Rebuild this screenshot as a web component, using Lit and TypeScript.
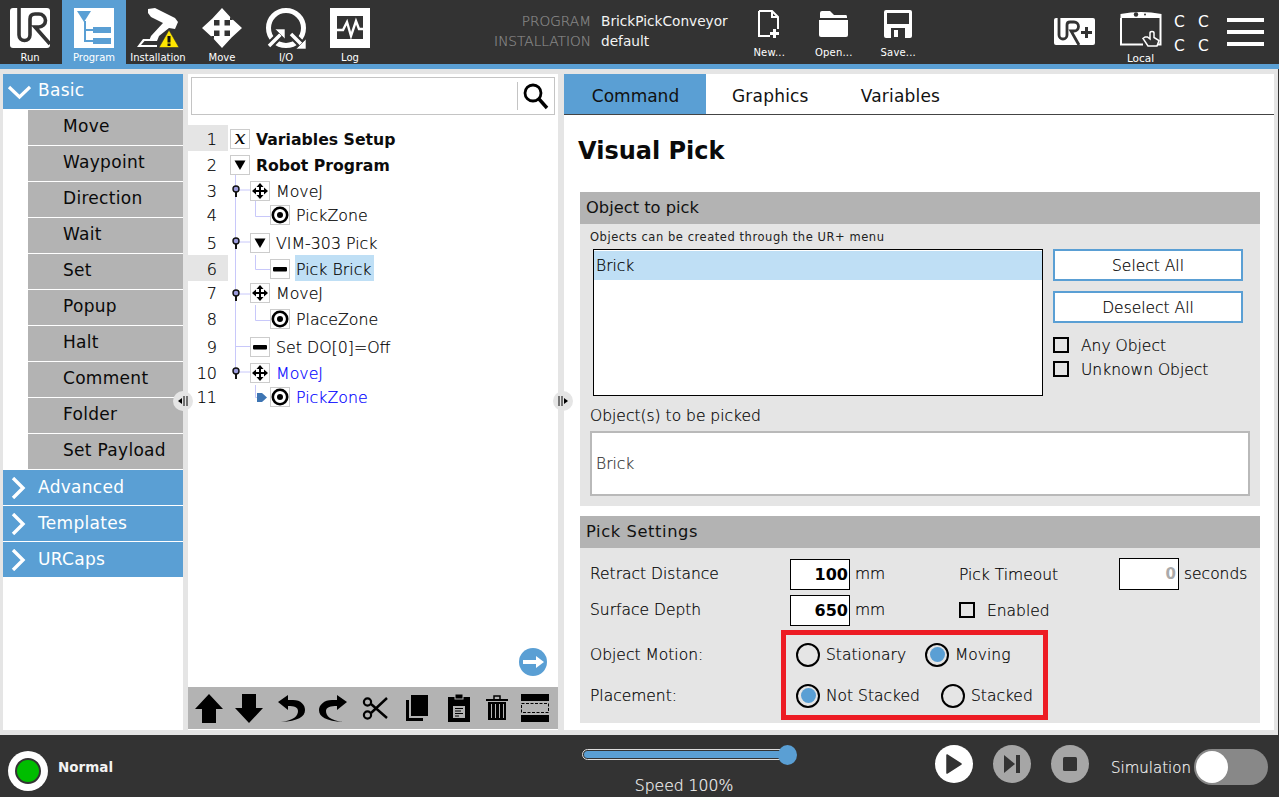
import { LitElement, html, css, svg } from "lit";
import { customElement } from "lit/decorators.js";

const urPath = "M9 0V27a5.500 5.500 0 0 0 11 0V11Q20 6 25 6H29a6.500 6.500 0 0 1 0 13H25L40 36";

const tabIcons: Record<string, unknown> = {
  Run: svg`<svg width="40" height="40" viewBox="0 0 40 40"><rect width="40" height="40" rx="3" fill="#fff"/><path d="${urPath}" fill="none" stroke="#333" stroke-width="3.600"/></svg>`,
  Program: svg`<svg width="40" height="40" viewBox="0 0 40 40"><rect width="40" height="40" fill="#fff"/><path d="M3 3H17L10 14Z" fill="#5a9fd4"/><path d="M11 13V33H19M11 22H19" fill="none" stroke="#5a9fd4" stroke-width="2"/><rect x="19" y="19" width="18" height="6" fill="#5a9fd4"/><rect x="19" y="30" width="18" height="6" fill="#5a9fd4"/></svg>`,
  Installation: svg`<svg width="42" height="40" viewBox="0 0 42 40"><path d="M0 39L6 31H20V33H7.500L4 37H20V39Z" fill="#fff"/><path d="M11 1L18 0L38 10L41 14L38 21L32 20L22 28L20 33H12L14 28L26 15L14 9L11 5Z" fill="#fff"/><path d="M22 39.500L32 22L42 39.500Z" fill="#ffe600" stroke="#333" stroke-width=".6"/><rect x="30.500" y="28" width="3" height="6.500" fill="#111"/><rect x="30.500" y="35.500" width="3" height="2.500" fill="#111"/></svg>`,
  Move: svg`<svg width="40" height="40" viewBox="0 0 40 40"><path d="M20 0L31 12H9ZM20 40L31 28H9ZM0 20L12 9V31ZM40 20L28 9V31Z" fill="#fff"/><path d="M17.500 8H22.500V32H17.500ZM8 17.500H32V22.500H8Z" fill="#fff"/></svg>`,
  "I/O": svg`<svg width="42" height="42" viewBox="0 0 42 42"><circle cx="21" cy="20" r="17.500" fill="none" stroke="#fff" stroke-width="5"/><path d="M4 38L17 25M39 39L26 26" stroke="#333" stroke-width="8"/><path d="M4 38L16 26M26 26L38 38" stroke="#fff" stroke-width="3.500"/><path d="M20 21V31L10 21Z" fill="#fff" stroke="#333" stroke-width=".6"/><path d="M41 41H31L41 31Z" fill="#fff" stroke="#333" stroke-width=".6"/></svg>`,
  Log: svg`<svg width="40" height="40" viewBox="0 0 40 40"><rect width="40" height="40" fill="#fff"/><rect x="7" y="8" width="26" height="23" fill="#333"/><path d="M7 22H13L17 14L21 28L26 13L29 21H33" fill="none" stroke="#fff" stroke-width="2.400"/></svg>`,
};

const arrows4 = svg`<svg width="16" height="16" viewBox="0 0 16 16"><path d="M8 0L11.500 4H9V7H12V4.500L16 8L12 11.500V9H9V12H11.500L8 16L4.500 12H7V9H4V11.500L0 8L4 4.500V7H7V4H4.500Z"/></svg>`;
const target = svg`<svg width="18" height="18" viewBox="0 0 18 18"><circle cx="9" cy="9" r="7.200" fill="none" stroke="#000" stroke-width="2.600"/><circle cx="9" cy="9" r="3"/></svg>`;
const dash = svg`<svg width="16" height="16" viewBox="0 0 16 16"><rect x="1" y="6" width="14" height="4.500" rx="1"/></svg>`;
const tri = svg`<svg width="12" height="12" viewBox="0 0 12 12"><path d="M.500 1.500H11.500L6 11Z"/></svg>`;
const xvar = html`<span class="xv">x</span>`;

type Row = { n: number; h: number; pt: number; pb: number; d: number; icon: unknown; label: string; bold?: boolean; run?: boolean; sel?: boolean; hl?: boolean };
const rows: Row[] = [
  { n: 1, h: 26, pt: 2, pb: 0, d: 0, icon: xvar, label: "Variables Setup", bold: true, hl: true },
  { n: 2, h: 26, pt: 2, pb: 0, d: 0, icon: tri, label: "Robot Program", bold: true },
  { n: 3, h: 26, pt: 2, pb: 0, d: 1, icon: arrows4, label: "MoveJ" },
  { n: 4, h: 26, pt: 0, pb: 2, d: 2, icon: target, label: "PickZone" },
  { n: 5, h: 26, pt: 2, pb: 0, d: 1, icon: tri, label: "VIM-303 Pick" },
  { n: 6, h: 26, pt: 2, pb: 0, d: 2, icon: dash, label: "Pick Brick", sel: true, hl: true },
  { n: 7, h: 24, pt: 0, pb: 0, d: 1, icon: arrows4, label: "MoveJ" },
  { n: 8, h: 28, pt: 0, pb: 0, d: 2, icon: target, label: "PlaceZone" },
  { n: 9, h: 27, pt: 1, pb: 0, d: 1, icon: dash, label: "Set DO[0]=Off" },
  { n: 10, h: 25, pt: 1, pb: 0, d: 1, icon: arrows4, label: "MoveJ", run: true },
  { n: 11, h: 25, pt: 0, pb: 1, d: 2, icon: target, label: "PickZone", run: true },
];

const basic = ["Move", "Waypoint", "Direction", "Wait", "Set", "Popup", "Halt", "Comment", "Folder", "Set Payload"];

@customElement("app-root")
export class AppRoot extends LitElement {
  static styles = css`
    :host { display: block; width: 1279px; height: 797px; overflow: hidden; font-family: "DejaVu Sans", sans-serif; color: #111; background: #e5e5e5; position: relative; opacity: .999; }
    .top { height: 64px; background: #333; display: flex; color: #fff; }
    .accent { height: 5px; background: #5a9fd4; }
    .navs { display: flex; margin-left: -2px; }
    .nav { width: 64px; display: flex; flex-direction: column; align-items: center; padding-top: 8px; font-size: 10px; box-sizing: border-box; }
    .nav .ic { height: 45px; display: flex; align-items: flex-start; }
    .nav.on { background: #5a9fd4; }
    .nav span { line-height: 13px; }
    .info { margin-left: 106px; display: grid; grid-template-columns: 103px auto; column-gap: 10px; font-size: 13.700px; line-height: 20px; padding-top: 11px; width: 250px; height: 40px; }
    .info .k { text-align: right; color: #8a8a8a; font-weight: 200; -webkit-text-stroke: .2px; }
    .info .v { color: #f4f4f4; }
    .files { display: flex; margin-left: -1px; }
    .file { width: 64.500px; display: flex; flex-direction: column; align-items: center; padding-top: 10px; font-size: 10px; letter-spacing: .2px; }
    .file .ic { height: 37px; }
    .urp { margin: 18px 0 0 123px; width: 42px; }
    .local { margin-left: 23px; width: 44px; display: flex; flex-direction: column; align-items: center; padding-top: 11px; font-size: 10.500px; }
    .local .ic { height: 41px; }
    .cs { margin: 12px 0 0 5px; display: grid; grid-template-columns: 24px 24px; grid-auto-rows: 24px; font-size: 15.500px; line-height: 20px; text-align: center; width: 48px; }
    .burger { margin: 18px 0 0 11px; width: 37px; display: flex; flex-direction: column; gap: 8px; }
    .burger i { display: block; height: 4px; background: #fff; }

    .main { height: 661px; width: 1278px; padding-top: 5px; display: flex; box-sizing: content-box; border-right: 1px solid #333; }
    .left { margin-left: 3px; width: 180px; background: #fff; height: 656px; display: flex; flex-direction: column; gap: 1px; }
    .cat { height: 35px; background: #5a9fd4; color: #fff; display: flex; align-items: center; font-size: 17px; font-weight: 500; gap: 7px; padding-left: 4px; letter-spacing: .3px; }
    .cat svg { flex: none; width: 24px; }
    .cat span { padding-bottom: 1px; }
    .cat.open span { padding-bottom: 4px; }
    .items { display: flex; flex-direction: column; gap: 1px; padding-left: 25px; }
    .item { height: 35px; background: #b3b3b3; display: flex; align-items: center; padding: 0 0 4px 35px; box-sizing: border-box; font-size: 17px; letter-spacing: .3px; color: #0a0a0a; }

    .mid { margin-left: 5px; width: 370px; height: 656px; display: flex; flex-direction: column; background: #fff; position: relative; }
    .search { margin: 3px 3px 0; height: 38px; border: 1.500px solid #c4c4c4; box-sizing: border-box; display: flex; justify-content: flex-end; align-items: center; padding-right: 5px; background: #fff; flex: none; }
    .search .sic { border-left: 1px solid #c4c4c4; height: 28px; padding-left: 3px; display: flex; align-items: center; }
    .tree { margin-top: 10px; display: flex; flex-direction: column; flex: 1; position: relative; }
    .row { display: flex; align-items: center; font-size: 15.800px; font-weight: 200; color: #000; -webkit-text-stroke: .2px; }
    .num { width: 40px; height: 100%; flex: none; box-sizing: border-box; padding: var(--pt) 11px var(--pb) 0; font-size: 16px; font-weight: 200; display: flex; align-items: center; justify-content: flex-end; color: #000; }
    .hl .num { background: #e5e5e5; }
    .box { width: 20px; height: 20px; border: 1.500px solid #ccc; box-sizing: border-box; background: #fff; display: flex; align-items: center; justify-content: center; flex: none; margin-right: 6px; margin-top: var(--pt); margin-bottom: var(--pb); position: relative; }
    .d0 { margin-left: 2px; } .d1 { margin-left: 22px; } .d2 { margin-left: 42px; }
    .xv { font-family: "DejaVu Serif", serif; font-style: italic; font-weight: 400; font-size: 19px; line-height: 14px; margin-top: -4px; }
    .lab { display: flex; align-items: center; height: 100%; box-sizing: border-box; padding-top: var(--pt); padding-bottom: var(--pb); }
    .lab.b { font-weight: 700; font-size: 15.700px; color: #0c0c0c; -webkit-text-stroke: 0; }
    .lab.r { color: #0000ff; }
    .lab.s { background: #bfdff5; padding-left: 1px; padding-right: 3px; margin-left: -1px; }
    .wires { position: absolute; left: 0; top: 0; pointer-events: none; }
    .go { position: absolute; left: 331px; bottom: 11px; width: 28px; height: 28px; }
    .tools { height: 42px; background: #b3b3b3; flex: none; margin-bottom: 1px; }
    .tools svg { display: block; }

    .handle { position: absolute; width: 20px; height: 20px; border-radius: 50%; background: #e5e5e5; display: flex; align-items: center; justify-content: center; top: 391px; }
    .h1 { left: 173px; } .h2 { left: 553px; }

    .right { margin-left: 6px; width: 710px; height: 656px; background: #fff; }
    .tabs { height: 40px; border-bottom: 1.500px solid #444; display: flex; font-size: 17px; font-weight: 500; box-sizing: content-box; letter-spacing: .2px; }
    .tab { display: flex; align-items: center; padding: 4px 26px 0; color: #111; }
    .tab.on { background: #5a9fd4; width: 142px; box-sizing: border-box; padding: 4px 0 0 1px; justify-content: center; margin-right: 0; letter-spacing: 0; }
    h1 { margin: 22px 0 0 14px; font-size: 24px; line-height: 28px; font-weight: 700; color: #0a0a0a; }
    .sec { margin: 0 14px 0 16px; background: #e5e5e5; }
    .sec h2 { margin: 0; background: #b3b3b3; height: 32px; box-sizing: border-box; font-size: 16.300px; font-weight: 500; display: flex; align-items: center; padding: 0 0 2px 6px; color: #111; }
    .s1 { margin-top: 27px; height: 314px; }
    .s2 { margin-top: 10px; height: 207px; }
    .s2 h2 { letter-spacing: .6px; }
    .hint { font-size: 11.500px; letter-spacing: .55px; line-height: 13px; padding: 7px 0 0 10px; font-weight: 400; color: #222; }
    .pick { display: flex; margin: 5px 0 0 13px; }
    .list { width: 450px; height: 147px; border: 1.500px solid #000; box-sizing: border-box; background: #fff; padding-top: 1px; }
    .list div { height: 29px; background: #bfdff5; padding: 2px 0 0 2px; box-sizing: border-box; line-height: 27px; font-size: 15.500px; font-weight: 200; color: #000; -webkit-text-stroke: .2px; }
    .ctl { margin-left: 10px; display: flex; flex-direction: column; }
    .btn { width: 190px; height: 32px; border: 2px solid #5a9fd4; box-sizing: border-box; background: #fff; font-size: 15.500px; font-weight: 200; display: flex; align-items: center; justify-content: center; padding-top: 2px; margin-bottom: 10px; color: #000; -webkit-text-stroke: .2px; }
    .chk { display: flex; align-items: center; height: 24px; font-size: 15.500px; font-weight: 200; gap: 12px; color: #000; -webkit-text-stroke: .2px; }
    .chk span { padding-top: 2px; }
    .chk i { width: 16px; height: 16px; border: 2px solid #000; box-sizing: border-box; display: block; background: transparent; }
    .lbl { font-size: 15.500px; font-weight: 200; padding: 10px 0 0 10px; line-height: 20px; color: #000; -webkit-text-stroke: .2px; }
    .out { margin: 5px 10px 0; height: 65px; border: 2px solid #b9b9b9; box-sizing: border-box; background: #fff; display: flex; align-items: center; padding: 0 0 0 4px; font-size: 15.500px; font-weight: 200; color: #333; -webkit-text-stroke: .2px; }

    .form { position: relative; padding: 10px 0 0 10px; font-size: 15.500px; font-weight: 200; color: #000; -webkit-text-stroke: .2px; }
    .frow { display: flex; align-items: center; }
    .frow.a { height: 32px; margin-bottom: 4px; }
    .fl { width: 200px; flex: none; }
    .num-in { width: 60px; height: 31px; flex: none; border: 1.500px solid #000; box-sizing: border-box; background: #fff; font-weight: 700; font-size: 16px; display: flex; align-items: center; justify-content: flex-end; padding-right: 1px; -webkit-text-stroke: 0; }
    .num-in.off { color: #aaa; font-size: 15px; height: 32px; border-width: 1px; padding-right: 2px; }
    .unit { margin-left: 5px; width: 104px; flex: none; }
    .unit.last { width: auto; }
    .fm { width: 160px; flex: none; padding-top: 2px; }
    .radios { padding-top: 4px; }
    .rrow { display: flex; align-items: center; height: 41px; }
    .rl { width: 206px; flex: none; }
    .radio { width: 24px; height: 24px; border: 2.500px solid #000; border-radius: 50%; box-sizing: border-box; margin-right: 6px; flex: none; display: flex; align-items: center; justify-content: center; background: transparent; }
    .radio.on::after { content: ""; width: 15px; height: 15px; border-radius: 50%; background: #5a9fd4; }
    .rt1 { width: 99px; flex: none; }
    .rt2 { width: 115px; flex: none; }
    .redbox { position: absolute; left: 781px; top: 630px; width: 267px; height: 90px; border: 5px solid #ed1c24; box-sizing: border-box; pointer-events: none; }

    .foot { height: 62px; background: #333; color: #fff; display: flex; position: relative; }
    .status { margin: 16px 0 0 8px; width: 40px; height: 40px; border-radius: 50%; background: #fff; display: flex; align-items: center; justify-content: center; flex: none; }
    .status i { border-radius: 50%; background: #00bd00; border: 2.500px solid #333; box-sizing: content-box; width: 22.500px; height: 22.500px; display: block; }
    .stext { margin: 24px 0 0 10px; font-size: 13.500px; font-weight: 700; line-height: 17px; width: 524px; flex: none; color: #f2f2f2; }
    .speed { width: 220px; flex: none; display: flex; flex-direction: column; padding-top: 9px; }
    .track { margin: 5px 0 0 0; width: 208px; height: 11px; border: 1px solid #ddd; border-radius: 6px; box-sizing: border-box; padding: 1px; position: relative; }
    .track b { display: block; height: 100%; background: #5a9fd4; border-radius: 4px; }
    .thumb { position: absolute; right: -8px; top: -5px; width: 19px; height: 20px; border-radius: 50%; background: #5a9fd4; }
    .sp { margin-top: 16px; width: 204px; text-align: center; font-size: 15.600px; line-height: 20px; font-weight: 200; color: #f4f4f4; -webkit-text-stroke: .2px; }
    .ctrl { display: flex; gap: 20px; margin: 10px 0 0 133px; }
    .ctrl div { width: 38px; height: 38px; border-radius: 50%; background: #a6a6a6; display: flex; align-items: center; justify-content: center; }
    .ctrl div.play { background: #fff; }
    .sim { margin: 23px 0 0 22px; font-size: 15px; font-weight: 200; line-height: 20px; color: #f4f4f4; -webkit-text-stroke: .2px; }
    .toggle { margin: 14px 0 0 3px; width: 74px; height: 36px; border-radius: 18px; background: #888; position: relative; flex: none; }
    .toggle i { position: absolute; left: 2px; top: 2px; width: 32px; height: 32px; border-radius: 50%; background: #fff; display: block; }
  `;

  private wires() {
    const c = "#c8c8fa";
    const node = (y: number) => svg`<path d="M48 ${y + 2}V${y + 8}" stroke="#111" stroke-width="2"/><circle cx="48" cy="${y}" r="3" fill="#9c9cdc" stroke="#111" stroke-width="1.400"/>`;
    return svg`<svg class="wires" width="200" height="290" viewBox="0 125 200 290">
      <path d="M47.500 170V372M47.500 190H62M67.500 201V216.500H82M47.500 242H62M67.500 255V269.500H82M47.500 294H62M67.500 305V320.500H82M47.500 346.500H62M47.500 372H62M67.500 385V397.500H72" fill="none" stroke="${c}" stroke-width="1"/>
      ${[189, 241, 293, 371].map(node)}
      <path d="M69 393H74L79 397.500L74 402H69Z" fill="#3e75b3"/>
    </svg>`;
  }

  private tools() {
    return svg`<svg width="370" height="42" viewBox="188 687 370 42">
      <path d="M209 694L223 709H216V723H202V709H195Z"/>
      <path d="M242 694H256V708H263L249 723L235 708H242Z"/>
      <path d="M278 702L288 695V700H293C301 700 305 705 305 710C305 717 298 721 281 722C294 720 298 716 298 711C298 707 294 706 288 706V710Z"/>
      <path d="M347 702L337 695V700H332C324 700 319 705 319 710C319 717 326 721 343 722C330 720 326 716 326 711C326 707 331 706 337 706V710Z"/>
      <g fill="none" stroke="#000"><circle cx="367.500" cy="702" r="3.600" stroke-width="2.200"/><circle cx="367.500" cy="715" r="3.600" stroke-width="2.200"/><path d="M371 704L387 718M371 713L387 698" stroke-width="2.400"/></g>
      <path d="M411 695H428V716H411Z"/><path d="M406 700H409V718H423V721H406Z"/>
      <path d="M448 697H470V722H448Z"/><rect x="455" y="694" width="8" height="5" stroke="#b3b3b3" stroke-width="1"/><rect x="453" y="706" width="12" height="12" fill="#b3b3b3"/><path d="M455 708.500h8M455 711h6M455 713.500h8M455 716h4" stroke="#000" stroke-width="1"/>
      <path d="M486 699H508V701H486Z"/><path d="M494 699V696H500V699" fill="none" stroke="#000" stroke-width="1.500"/><path d="M488 702H506V720H488Z"/><path d="M491.500 704V718M495.500 704V718M499.500 704V718M503.500 704V718" stroke="#b3b3b3" stroke-width="1"/>
      <path d="M521 694H549V701H521ZM521 715H549V722H521Z"/>
      <rect x="521.500" y="703.500" width="27" height="9" fill="none" stroke="#000" stroke-dasharray="3 1.500"/>
    </svg>`;
  }

  render() {
    const chevDown = svg`<svg width="24" height="16" viewBox="0 0 24 16"><path d="M2 3L12.500 13L23 3" fill="none" stroke="#fff" stroke-width="3.200"/></svg>`;
    const chevRight = svg`<svg width="24" height="22" viewBox="0 0 24 22"><path d="M6 1L16 11L6 21" fill="none" stroke="#fff" stroke-width="3.400"/></svg>`;
    return html`
      <div class="top">
        <div class="navs">
          ${["Run", "Program", "Installation", "Move", "I/O", "Log"].map(
            (n) => html`<div class="nav ${n === "Program" ? "on" : ""}"><div class="ic">${tabIcons[n]}</div><span>${n}</span></div>`
          )}
        </div>
        <div class="info">
          <span class="k">PROGRAM</span><span class="v">BrickPickConveyor</span>
          <span class="k">INSTALLATION</span><span class="v">default</span>
        </div>
        <div class="files">
          <div class="file"><div class="ic"><svg width="22" height="28" viewBox="0 0 22 28"><path d="M1 1H14L20 7V19M12 26H1V1M14 1V7H20" fill="none" stroke="#fff" stroke-width="2"/><path d="M15 19h3v3h3v3h-3v3h-3v-3h-3v-3h3z" fill="#fff"/></svg></div>New...</div>
          <div class="file"><div class="ic"><svg width="29" height="27" viewBox="0 0 29 27"><path d="M1 8V3Q1 1 3 1H11L15 5H27Q28 5 28 7V8Z" fill="#fff"/><path d="M0 10H29V25Q29 27 27 27H2Q0 27 0 25Z" fill="#fff"/></svg></div>Open...</div>
          <div class="file"><div class="ic"><svg width="28" height="28" viewBox="0 0 28 28"><path d="M2 0H26Q28 0 28 2V26Q28 28 26 28H2Q0 28 0 26V2Q0 0 2 0Z" fill="#fff"/><rect x="3" y="3" width="22" height="11" fill="#333"/><rect x="7" y="18" width="14" height="10" fill="#333"/><rect x="10" y="20" width="4" height="7" fill="#fff"/></svg></div>Save...</div>
        </div>
        <div class="urp"><svg width="42" height="28" viewBox="0 0 42 28"><rect width="41" height="27" rx="2" fill="#fff"/><path d="M5 0V17a4 4 0 0 0 8 0V7Q13 4 16 4H20a4.500 4.500 0 0 1 0 9H17L25 27" fill="none" stroke="#333" stroke-width="2.800"/><path d="M31 9h3v4h4v3h-4v4h-3v-4h-4v-3h4z" fill="#333"/></svg></div>
        <div class="local">
          <div class="ic"><svg width="44" height="36" viewBox="0 0 44 36"><path d="M1.500 3Q22 -1 42.500 3V7H1.500Z" fill="#fff"/><path d="M2 7V33.500H24M41.500 7V33.500H36" fill="none" stroke="#fff" stroke-width="2"/><circle cx="17" cy="3.500" r="2.200" fill="#333"/><circle cx="26" cy="3.500" r="1" fill="#333"/><path d="M26 26L24 27.500L29 35H38L40 29.500L35 26.500V22Q35 20.500 33 20.500Q31 20.500 31 22V28L28.500 26Z" fill="#333" stroke="#fff" stroke-width="1.500"/></svg></div>
          <span>Local</span>
        </div>
        <div class="cs"><span>C</span><span>C</span><span>C</span><span>C</span></div>
        <div class="burger"><i></i><i></i><i></i></div>
      </div>
      <div class="accent"></div>
      <div class="main">
        <div class="left">
          <div class="cat open">${chevDown}<span>Basic</span></div>
          <div class="items">${basic.map((b) => html`<div class="item">${b}</div>`)}</div>
          <div class="cat">${chevRight}<span>Advanced</span></div>
          <div class="cat">${chevRight}<span>Templates</span></div>
          <div class="cat">${chevRight}<span>URCaps</span></div>
        </div>
        <div class="mid">
          <div class="search"><div class="sic"><svg width="28" height="28" viewBox="0 0 28 28"><circle cx="12" cy="11" r="8" fill="none" stroke="#000" stroke-width="2.800"/><path d="M18 17L26 26" stroke="#000" stroke-width="3.400"/></svg></div></div>
          <div class="tree">
            ${this.wires()}
            ${rows.map(
              (r) => html`<div class="row ${r.hl ? "hl" : ""}" style="height:${r.h}px;--pt:${r.pt}px;--pb:${r.pb}px">
                <div class="num">${r.n}</div>
                <div class="box d${r.d}">${r.icon}</div>
                <div class="lab ${r.bold ? "b" : ""} ${r.run ? "r" : ""} ${r.sel ? "s" : ""}">${r.label}</div>
              </div>`
            )}
            <svg class="go" viewBox="0 0 28 28"><circle cx="14" cy="14" r="14" fill="#5a9fd4"/><path d="M4 12H17V8L25 14L17 20V16H4Z" fill="#fff"/></svg>
          </div>
          <div class="tools">${this.tools()}</div>
        </div>
        <div class="right">
          <div class="tabs"><div class="tab on">Command</div><div class="tab">Graphics</div><div class="tab">Variables</div></div>
          <h1>Visual Pick</h1>
          <div class="sec s1">
            <h2>Object to pick</h2>
            <div class="hint">Objects can be created through the UR+ menu</div>
            <div class="pick">
              <div class="list"><div>Brick</div></div>
              <div class="ctl">
                <div class="btn">Select All</div>
                <div class="btn">Deselect All</div>
                <div class="chk"><i></i><span>Any Object</span></div>
                <div class="chk"><i></i><span>Unknown Object</span></div>
              </div>
            </div>
            <div class="lbl">Object(s) to be picked</div>
            <div class="out">Brick</div>
          </div>
          <div class="sec s2">
            <h2>Pick Settings</h2>
            <div class="form">
              <div class="frow a">
                <span class="fl">Retract Distance</span><div class="num-in">100</div><span class="unit">mm</span>
                <span class="fm">Pick Timeout</span><div class="num-in off">0</div><span class="unit last">seconds</span>
              </div>
              <div class="frow a">
                <span class="fl">Surface Depth</span><div class="num-in">650</div><span class="unit">mm</span>
                <div class="chk"><i></i><span>Enabled</span></div>
              </div>
              <div class="radios">
                <div class="rrow"><span class="rl">Object Motion:</span><div class="radio"></div><span class="rt1">Stationary</span><div class="radio on"></div><span>Moving</span></div>
                <div class="rrow"><span class="rl">Placement:</span><div class="radio on"></div><span class="rt2">Not Stacked</span><div class="radio"></div><span>Stacked</span></div>
              </div>
            </div>
          </div>
        </div>
      </div>
      <div class="foot">
        <div class="status"><i></i></div>
        <div class="stext">Normal</div>
        <div class="speed">
          <div class="track"><b></b><div class="thumb"></div></div>
          <div class="sp">Speed 100%</div>
        </div>
        <div class="ctrl">
          <div class="play"><svg width="18" height="20" viewBox="0 0 18 20"><path d="M2 1L16 10L2 19Z" fill="#333" stroke="#333" stroke-linejoin="round" stroke-width="1.500"/></svg></div>
          <div><svg width="20" height="20" viewBox="0 0 20 20"><path d="M2 1L13 10L2 19Z" fill="#333"/><rect x="14" y="1" width="4" height="18" fill="#333"/></svg></div>
          <div><svg width="18" height="18" viewBox="0 0 18 18"><rect x="2" y="2" width="14" height="14" rx="1.500" fill="#333"/></svg></div>
        </div>
        <div class="sim">Simulation</div>
        <div class="toggle"><i></i></div>
      </div>
      <div class="handle h1"><svg width="12" height="12" viewBox="0 0 12 12"><path d="M5 3V9L1 6Z"/><path d="M7 1V11M10 1V11" stroke="#000"/></svg></div>
      <div class="handle h2"><svg width="12" height="12" viewBox="0 0 12 12"><path d="M2 1V11M5 1V11" stroke="#000"/><path d="M7 3V9L11 6Z"/></svg></div>
      <div class="redbox"></div>
    `;
  }
}
